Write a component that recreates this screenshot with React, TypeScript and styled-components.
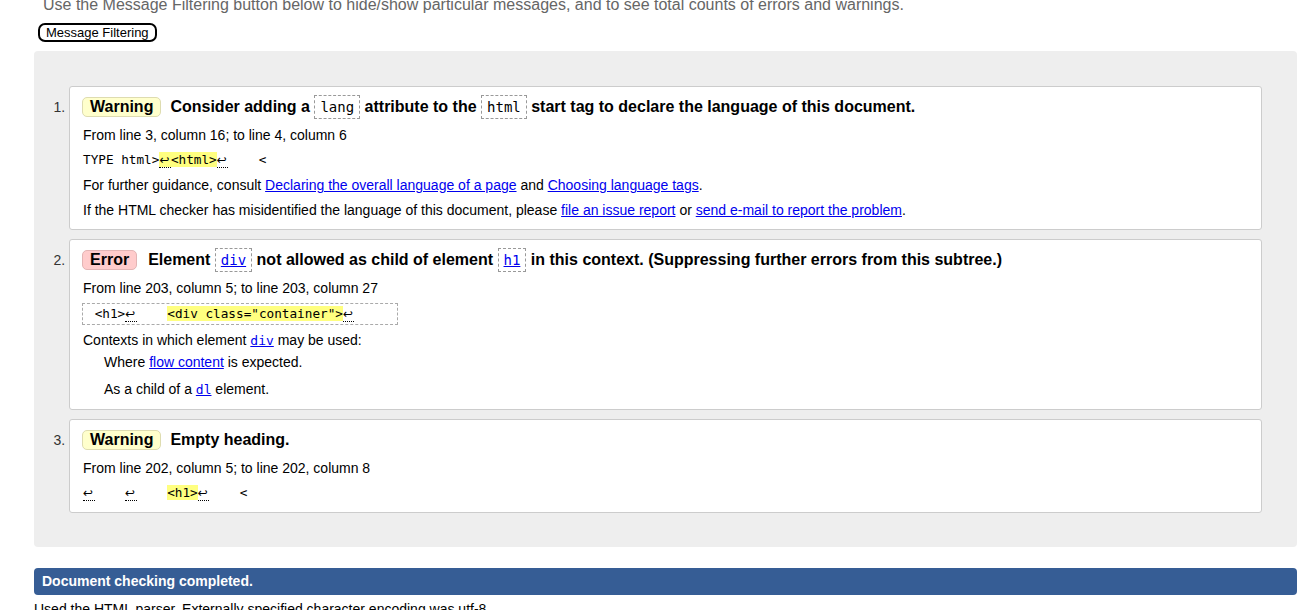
import { createGlobalStyle, styled } from 'styled-components';

const GlobalStyle = createGlobalStyle`
  html, body {
    margin: 0;
    padding: 0;
    background: #fff;
  }
  body {
    font-family: "Liberation Sans", Arial, sans-serif;
    color: #000;
    overflow: hidden;
  }
`;

const Page = styled.div`
  padding: 0 10px 0 34px;
`;

const Intro = styled.p`
  margin: -4px 0 0 9px;
  font-size: 16px;
  line-height: 18px;
  color: #666;
  white-space: nowrap;
`;

const FilterButton = styled.button`
  display: block;
  margin: 9px 0 0 4px;
  padding: 0 6px;
  height: 19px;
  border: 2px solid #000;
  border-radius: 7px;
  background: #fff;
  font-family: "Liberation Sans", Arial, sans-serif;
  font-size: 13px;
  line-height: 15px;
  color: #000;
`;

const Results = styled.ol`
  margin: 9px 0 0;
  padding: 35px 35px 34px;
  list-style: decimal outside;
  background: #eee;
  border-radius: 4px;
`;

const Message = styled.li`
  background: #fff;
  border: 1px solid #ccc;
  border-radius: 3px;
  padding: 7px 13px 9px;

  & + & {
    margin-top: 9px;
  }

  &::marker {
    font-size: 14px;
    font-weight: normal;
    color: #333;
  }
`;

const Title = styled.p`
  margin: 0;
  font-size: 16px;
  font-weight: bold;
  line-height: 26px;
`;

const Badge = styled.span<{ $kind: 'warning' | 'error' }>`
  display: inline-block;
  margin: 0 ${(p) => (p.$kind === 'error' ? '11px' : '9px')} 0 -1px;
  padding: 0 7px;
  line-height: 18px;
  border: 1px solid ${(p) => (p.$kind === 'error' ? '#e3b5b5' : '#dedcb0')};
  border-radius: 5px;
  background: ${(p) => (p.$kind === 'error' ? '#ffcccc' : '#ffffcc')};
`;

const TitleCode = styled.code`
  display: inline-block;
  padding: 0 5px;
  border: 1px dashed #999;
  font-family: "DejaVu Sans Mono", "Liberation Mono", monospace;
  font-size: 14px;
  font-weight: normal;
  line-height: 22px;
`;

const Line = styled.p`
  margin: 5px 0 0;
  font-size: 14px;
  line-height: 20px;
`;

const Extract = styled.p<{ $boxed?: boolean }>`
  margin: 5px 0 0;
  font-family: "DejaVu Sans Mono", "Liberation Mono", monospace;
  font-size: 12.7px;
  line-height: 20px;
  white-space: pre;

  ${(p) =>
    p.$boxed &&
    `
    width: fit-content;
    margin-left: -1px;
    padding: 0 4px;
    border: 1px dashed #aaa;
  `}
`;

const Mark = styled.span`
  background: #ffff80;
`;

const Ret = styled.span`
  display: inline-block;
  width: 11.5px;
  line-height: 14px;
  font-family: "DejaVu Sans", sans-serif;
  font-size: 12px;
  border-bottom: 1px dotted #000;
`;

const Link = styled.a`
  color: #00e;
  text-decoration: underline;
`;

const CodeLink = styled.a`
  color: #00e;
  text-decoration: underline;
  font-family: "DejaVu Sans Mono", "Liberation Mono", monospace;
  font-size: 13px;
  font-weight: normal;
`;

const Contexts = styled.dl`
  margin: 5px 0 0;
  font-size: 14px;
  line-height: 20px;
`;

const ContextTerm = styled.dt`
  margin: 0;
`;

const ContextItem = styled.dd<{ $gap: number }>`
  margin: ${(p) => p.$gap}px 0 0 21px;
`;

const Completed = styled.div`
  margin-top: 21px;
  height: 27px;
  padding: 0 8px;
  border-radius: 4px;
  background: #365d95;
  color: #fff;
  font-size: 14px;
  font-weight: bold;
  line-height: 27px;
`;

const Note = styled.p`
  margin: 4px 0 0;
  font-size: 14px;
  line-height: 20px;
`;

const R = () => <Ret>↩</Ret>;

export default function App() {
  return (
    <>
      <GlobalStyle />
      <Page>
        <Intro>
          Use the Message Filtering button below to hide/show particular messages, and to see total counts of errors and warnings.
        </Intro>
        <FilterButton>Message Filtering</FilterButton>
        <Results>
          <Message>
            <Title>
              <Badge $kind="warning">Warning</Badge>Consider adding a <TitleCode>lang</TitleCode> attribute to the{' '}
              <TitleCode>html</TitleCode> start tag to declare the language of this document.
            </Title>
            <Line>From line 3, column 16; to line 4, column 6</Line>
            <Extract>
              TYPE html&gt;<Mark><R />&lt;html&gt;</Mark><R />{'    <'}
            </Extract>
            <Line>
              For further guidance, consult <Link href="#">Declaring the overall language of a page</Link> and{' '}
              <Link href="#">Choosing language tags</Link>.
            </Line>
            <Line>
              If the HTML checker has misidentified the language of this document, please{' '}
              <Link href="#">file an issue report</Link> or <Link href="#">send e-mail to report the problem</Link>.
            </Line>
          </Message>
          <Message>
            <Title>
              <Badge $kind="error">Error</Badge>Element{' '}
              <TitleCode>
                <Link href="#">div</Link>
              </TitleCode>{' '}
              not allowed as child of element{' '}
              <TitleCode>
                <Link href="#">h1</Link>
              </TitleCode>{' '}
              in this context. (Suppressing further errors from this subtree.)
            </Title>
            <Line>From line 203, column 5; to line 203, column 27</Line>
            <Extract $boxed>
              {' <h1>'}<R />{'    '}<Mark>&lt;div class="container"&gt;</Mark><R />{'     '}
            </Extract>
            <Contexts>
              <ContextTerm>
                Contexts in which element <CodeLink href="#">div</CodeLink> may be used:
              </ContextTerm>
              <ContextItem $gap={1}>
                Where <Link href="#">flow content</Link> is expected.
              </ContextItem>
              <ContextItem $gap={7}>
                As a child of a <CodeLink href="#">dl</CodeLink> element.
              </ContextItem>
            </Contexts>
          </Message>
          <Message>
            <Title>
              <Badge $kind="warning">Warning</Badge>Empty heading.
            </Title>
            <Line>From line 202, column 5; to line 202, column 8</Line>
            <Extract>
              <R />{'    '}<R />{'    '}<Mark>&lt;h1&gt;</Mark><R />{'    <'}
            </Extract>
          </Message>
        </Results>
        <Completed>Document checking completed.</Completed>
        <Note>Used the HTML parser. Externally specified character encoding was utf-8.</Note>
      </Page>
    </>
  );
}
